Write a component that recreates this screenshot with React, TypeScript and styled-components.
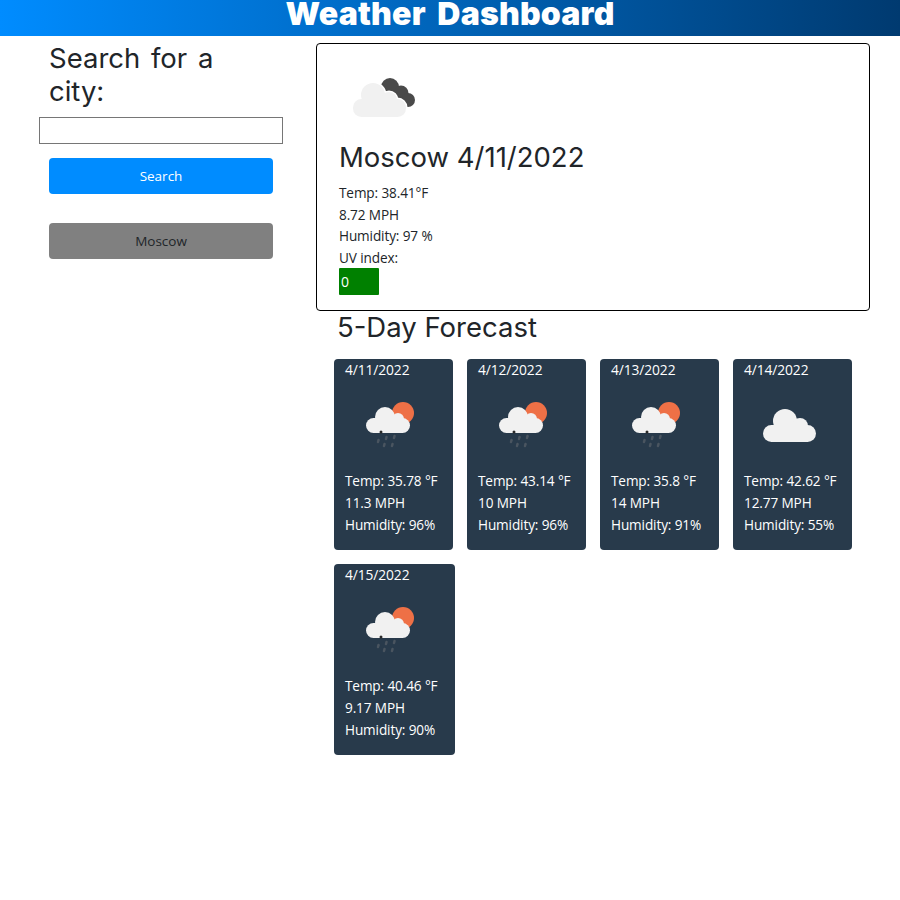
import React from 'react';
import styled, { createGlobalStyle } from 'styled-components';

const GlobalStyle = createGlobalStyle`
	html, body {
		margin: 0;
		background: #fff;
	}
	* {
		box-sizing: border-box;
	}
	body {
		font-family: "Open Sans", "Noto Sans", sans-serif;
		font-size: 14px;
		color: #212529;
	}
`;

const Page = styled.div`
	width: 900px;
	height: 900px;
	overflow: hidden;
`;

const Header = styled.header`
	height: 36px;
	background: linear-gradient(90deg, #008cff 0%, #003a70 100%);
	color: #fff;
	font-family: Inter, sans-serif;
	font-size: 32px;
	font-weight: 900;
	line-height: 27px;
	letter-spacing: 0.2px;
	word-spacing: 5px;
	text-align: center;
`;

const Layout = styled.div`
	display: flex;
	align-items: flex-start;
`;

const Sidebar = styled.aside`
	width: 316px;
	flex: none;
	padding: 6px 0 0 39px;
`;

const SideTitle = styled.h2`
	margin: 0 0 9px 10px;
	width: 190px;
	font-family: Inter, sans-serif;
	font-size: 27.5px;
	font-weight: 400;
	line-height: 33px;
	word-spacing: 3px;
`;

const CityInput = styled.input`
	display: block;
	width: 244px;
	height: 27px;
	border: 1px solid #767676;
	background: #fff;
	padding: 0 2px;
`;

const ActionButton = styled.button<{ $tone: 'primary' | 'history' }>`
	display: block;
	width: 224px;
	height: 36px;
	margin: ${(p) => (p.$tone === 'primary' ? '14px 0 0 10px' : '29px 0 0 10px')};
	border: 0;
	border-radius: 4px;
	background: ${(p) => (p.$tone === 'primary' ? '#008cff' : '#808080')};
	color: ${(p) => (p.$tone === 'primary' ? '#fff' : '#212529')};
	font-family: "Open Sans", "Noto Sans", sans-serif;
	font-size: 13.5px;
`;

const Main = styled.main`
	width: 554px;
	padding-top: 7px;
`;

const CurrentCard = styled.section`
	height: 268px;
	border: 1px solid #000;
	border-radius: 4px;
	padding: 22px 22px 0;
`;

const CurrentIcon = styled.svg`
	display: block;
	margin: 12px 0 0 14px;
`;

const CurrentTitle = styled.h2`
	margin: 23px 0 8px;
	font-family: Inter, sans-serif;
	font-size: 27.5px;
	font-weight: 400;
	line-height: 34px;
`;

const StatLine = styled.div`
	font-size: 13.6px;
	letter-spacing: -0.12px;
	line-height: 21.5px;
`;

const UvBadge = styled.div`
	width: 40px;
	height: 27px;
	padding-left: 2px;
	border-radius: 1px;
	background: #008000;
	color: #fff;
	font-size: 14px;
	line-height: 27px;
`;

const ForecastTitle = styled.h2`
	margin: 0 0 0 21px;
	font-family: Inter, sans-serif;
	font-size: 27.5px;
	font-weight: 400;
	line-height: 33px;
`;

const ForecastGrid = styled.div`
	display: flex;
	flex-wrap: wrap;
	gap: 14px;
	margin: 15px 0 0 18px;
`;

const DayCard = styled.article<{ $wide?: boolean }>`
	width: ${(p) => (p.$wide ? '121px' : '119px')};
	height: 191px;
	padding: 0 11px;
	border-radius: 4px;
	background: #283a4b;
	color: #fff;
`;

const DayDate = styled.div`
	font-size: 13.8px;
	letter-spacing: -0.1px;
	line-height: 21px;
`;

const DayIcon = styled.div`
	height: 90px;
	display: flex;
	align-items: flex-start;
	padding: 22px 0 0 21px;
`;

const OvercastSvg = styled.svg`
	margin: 7px 0 0 -2px;
`;

const DayStat = styled.div`
	font-size: 13.6px;
	letter-spacing: -0.12px;
	line-height: 21.8px;
`;

const CloudyIcon: React.FC = () => (
	<CurrentIcon width="63" height="39" viewBox="0 0 63 39">
		<g fill="#4a4a4a">
			<circle cx="37" cy="9" r="9" />
			<circle cx="48" cy="15" r="7.5" />
			<circle cx="55" cy="22" r="7" />
		</g>
		<g fill="#fff" stroke="#fff" strokeWidth="3">
			<circle cx="20" cy="17" r="12" />
			<circle cx="36" cy="22" r="8" />
			<rect x="0" y="21" width="53" height="17" rx="8.5" />
		</g>
		<g fill="#f1f1f1">
			<circle cx="20" cy="17" r="12" />
			<circle cx="36" cy="22" r="8" />
			<rect x="0" y="21" width="53" height="18" rx="8.5" />
		</g>
	</CurrentIcon>
);

const RainSunIcon: React.FC = () => (
	<svg width="50" height="46" viewBox="0 0 50 46">
		<circle cx="37" cy="11" r="11" fill="#ee7046" />
		<g fill="#f1f1f1">
			<circle cx="19" cy="15" r="10" />
			<circle cx="32" cy="17" r="6" />
			<rect x="0" y="16" width="44" height="15" rx="7.5" />
		</g>
		<circle cx="15" cy="30" r="1.5" fill="#2a2a2a" />
		<g stroke="#4a5560" strokeWidth="2.5" strokeLinecap="round">
			<line x1="12.5" y1="38" x2="12" y2="40" />
			<line x1="20.5" y1="35" x2="20" y2="37" />
			<line x1="28.5" y1="34" x2="28" y2="36" />
			<line x1="18.5" y1="42" x2="18" y2="44" />
			<line x1="26.5" y1="42" x2="26" y2="44" />
		</g>
	</svg>
);

const OvercastIcon: React.FC = () => (
	<OvercastSvg width="53" height="33" viewBox="0 0 53 33">
		<g fill="#f1f1f1">
			<circle cx="22" cy="12" r="12" />
			<circle cx="37" cy="17" r="8" />
			<rect x="0" y="16" width="53" height="17" rx="8.5" />
		</g>
	</OvercastSvg>
);

const days = [
	{ date: '4/11/2022', temp: '35.78', wind: '11.3', hum: '96', icon: 'rain' },
	{ date: '4/12/2022', temp: '43.14', wind: '10', hum: '96', icon: 'rain' },
	{ date: '4/13/2022', temp: '35.8', wind: '14', hum: '91', icon: 'rain' },
	{ date: '4/14/2022', temp: '42.62', wind: '12.77', hum: '55', icon: 'cloud' },
	{ date: '4/15/2022', temp: '40.46', wind: '9.17', hum: '90', icon: 'rain' },
];

const App: React.FC = () => (
	<Page>
		<GlobalStyle />
		<Header>Weather Dashboard</Header>
		<Layout>
			<Sidebar>
				<SideTitle>Search for a city:</SideTitle>
				<CityInput type="text" />
				<ActionButton $tone="primary">Search</ActionButton>
				<ActionButton $tone="history">Moscow</ActionButton>
			</Sidebar>
			<Main>
				<CurrentCard>
					<CloudyIcon />
					<CurrentTitle>Moscow 4/11/2022</CurrentTitle>
					<StatLine>Temp: 38.41°F</StatLine>
					<StatLine>8.72 MPH</StatLine>
					<StatLine>Humidity: 97 %</StatLine>
					<StatLine>UV index:</StatLine>
					<UvBadge>0</UvBadge>
				</CurrentCard>
				<ForecastTitle>5-Day Forecast</ForecastTitle>
				<ForecastGrid>
					{days.map((d, i) => (
						<DayCard key={d.date} $wide={i === 4}>
							<DayDate>{d.date}</DayDate>
							<DayIcon>{d.icon === 'rain' ? <RainSunIcon /> : <OvercastIcon />}</DayIcon>
							<DayStat>Temp: {d.temp} °F</DayStat>
							<DayStat>{d.wind} MPH</DayStat>
							<DayStat>Humidity: {d.hum}%</DayStat>
						</DayCard>
					))}
				</ForecastGrid>
			</Main>
		</Layout>
	</Page>
);

export default App;
